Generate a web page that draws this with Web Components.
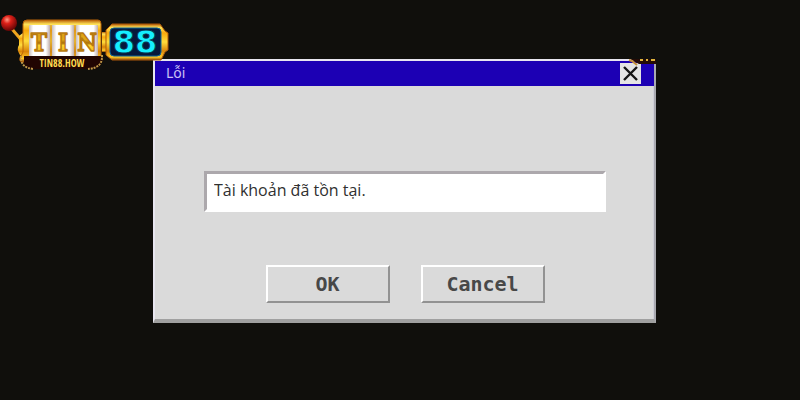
<!DOCTYPE html>
<html lang="vi">
<head>
<meta charset="utf-8">
<meta name="viewport" content="width=device-width, initial-scale=1">
<title>Lỗi</title>
<style>
    * { box-sizing: border-box; }
    body {
        margin: 0;
        min-height: 100vh;
        background: #100f0c;
        font-family: "Noto Sans", "Open Sans", sans-serif;
    }
    main { padding: 59px 144px 77px 153px; }
</style>
</head>
<body>
<main>
    <error-dialog heading="Lỗi">
        <message-box slot="message" label="Nội dung" value="Tài khoản đã tồn tại."></message-box>
        <retro-button slot="actions">OK</retro-button>
        <retro-button slot="actions">Cancel</retro-button>
    </error-dialog>
</main>
<site-logo></site-logo>

<script>
class SiteLogo extends HTMLElement {
    constructor() {
        super();
        this.attachShadow({ mode: 'open' });
    }

    connectedCallback() {
        this.shadowRoot.innerHTML = `
        <style>
            :host {
                position: absolute;
                left: 0;
                top: 12px;
                display: block;
            }
            svg { display: block; }
            text { font-weight: bold; text-anchor: middle; }
            .reels { font-family: "DejaVu Serif Condensed", "DejaVu Serif", serif; font-size: 24px; }
            .url { font-family: "Open Sans Condensed", "Roboto Condensed", "Liberation Sans", sans-serif; font-size: 10px; }
            .digits { font-family: "DejaVu Sans", sans-serif; font-size: 32px; }
        </style>
        <svg width="170" height="62" viewBox="0 12 170 62" role="img" aria-label="TIN 88">
            <defs>
                <linearGradient id="gold" x1="0" y1="0" x2="0" y2="1">
                    <stop offset="0" stop-color="#b85e08"/>
                    <stop offset=".1" stop-color="#ffe45a"/>
                    <stop offset=".25" stop-color="#f8a80c"/>
                    <stop offset=".5" stop-color="#ffdc3c"/>
                    <stop offset=".75" stop-color="#d98408"/>
                    <stop offset=".92" stop-color="#ffc928"/>
                    <stop offset="1" stop-color="#8e4605"/>
                </linearGradient>
                <linearGradient id="reel">
                    <stop offset="0" stop-color="#c9bebb"/>
                    <stop offset=".2" stop-color="#ffffff"/>
                    <stop offset=".8" stop-color="#ffffff"/>
                    <stop offset="1" stop-color="#bfaeaa"/>
                </linearGradient>
                <linearGradient id="letter" x1="0" y1="0" x2="0" y2="1">
                    <stop offset="0" stop-color="#d99a12"/>
                    <stop offset=".4" stop-color="#e0a818"/>
                    <stop offset=".52" stop-color="#a86d0a"/>
                    <stop offset=".6" stop-color="#ffd530"/>
                    <stop offset="1" stop-color="#e9a712"/>
                </linearGradient>
                <radialGradient id="ball" cx=".38" cy=".3" r=".7">
                    <stop offset="0" stop-color="#ff9a85"/>
                    <stop offset=".35" stop-color="#de2018"/>
                    <stop offset="1" stop-color="#650505"/>
                </radialGradient>
            </defs>
            <path d="M12 29l11 13" stroke="#f0a51e" stroke-width="3"/>
            <circle cx="9" cy="23" r="8" fill="url(#ball)"/>
            <path d="M19 36l5-4v26l-4-3q-4-6-1-10z" fill="url(#gold)"/>
            <path d="M27 20h71q3 0 3 4v34q0 4-4 4H23q-4 0-3-4l3-6V24q0-4 4-4z" fill="url(#gold)" stroke="#b96408"/>
            <g fill="url(#reel)">
                <rect x="29" y="25" width="21" height="32" rx="1"/>
                <rect x="52" y="25" width="22" height="32"/>
                <rect x="76" y="25" width="22" height="32" rx="1"/>
            </g>
            <path d="M51 25v31M75 25v31" stroke="#c98a2a" stroke-width="1"/>
            <g class="reels" fill="url(#letter)" stroke="#b87a10" stroke-width="1.4" stroke-linejoin="round">
                <text x="39" y="51">T</text>
                <text x="63" y="51">I</text>
                <text x="87" y="51">N</text>
            </g>
            <path d="M24 56h76q3 0 3 4l-3 5q-2 4-5 4H31q-4 0-7-5z" fill="#210502"/>
            <g fill="none" stroke="#c29a4a" stroke-width="2" stroke-dasharray="2 1">
                <path d="M21 56q-1 12 13 13"/>
                <path d="M102 55q1 13-14 14"/>
            </g>
            <text class="url" x="62" y="67" fill="#ffd950">TIN88.HOW</text>
            <path d="M102 32h7v20h-7z" fill="url(#gold)"/>
            <path d="M112 24h48l5 7 3 2v17l-3 2-4 8h-49l-6-5V30z" fill="url(#gold)" stroke="#ac590b"/>
            <rect x="110" y="28" width="51" height="28" rx="4" fill="#06183b" stroke="#08639a"/>
            <text class="digits" x="135" y="53" fill="#15eeff" stroke="#06304f" stroke-width=".8">88</text>
        </svg>
        `;
    }
}
customElements.define('site-logo', SiteLogo);

class MessageBox extends HTMLElement {
    constructor() {
        super();
        this.attachShadow({ mode: 'open' });
    }

    connectedCallback() {
        this.shadowRoot.innerHTML = `
        <style>
            :host { display: block; }
            input {
                display: block;
                box-sizing: border-box;
                width: 100%;
                height: 41px;
                padding: 0 7px 3px;
                border: 3px solid #fff;
                border-top-color: #aca8ac;
                border-left-color: #aca8ac;
                background: #fff;
                color: #303030;
                font: 16px "Open Sans", "Noto Sans", sans-serif;
                outline: none;
            }
        </style>
        <input type="text" readonly>
        `;
        const input = this.shadowRoot.querySelector('input');
        input.value = this.getAttribute('value');
        input.setAttribute('aria-label', this.getAttribute('label'));
    }
}
customElements.define('message-box', MessageBox);

class RetroButton extends HTMLElement {
    constructor() {
        super();
        this.attachShadow({ mode: 'open' });
    }

    connectedCallback() {
        this.shadowRoot.innerHTML = `
        <style>
            :host { display: block; }
            button {
                display: block;
                width: 124px;
                height: 38px;
                padding: 0;
                border: 2px solid #fff;
                border-right-color: #929292;
                border-bottom-color: #929292;
                background: #dadada;
                color: #484848;
                font: bold 20px "DejaVu Sans Mono", monospace;
            }
        </style>
        <button type="button"><slot></slot></button>
        `;
    }
}
customElements.define('retro-button', RetroButton);

class ErrorDialog extends HTMLElement {
    constructor() {
        super();
        this.attachShadow({ mode: 'open' });
    }

    connectedCallback() {
        this.shadowRoot.innerHTML = `
        <style>
            :host {
                display: block;
                position: relative;
                border: 2px solid #e8e6f0;
                border-right: 2px solid #a9a9b0;
                border-bottom: 4px solid #a0a0a0;
                background: #dadada;
            }
            header {
                display: flex;
                box-sizing: border-box;
                align-items: flex-start;
                justify-content: space-between;
                height: 25px;
                padding: 2px 13px 0 11px;
                background: #1c00b4;
                color: #c9c0f5;
            }
            h1 { margin: 0; font-size: 14px; font-weight: normal; line-height: 20px; }
            .close {
                display: flex;
                width: 21px;
                height: 21px;
                padding: 0;
                border: 0;
                background: #e4e4e4;
                align-items: center;
                justify-content: center;
            }
            .content {
                padding: 85px 47px 16px 49px;
                border-right: 1px solid #cfcfd8;
            }
            .actions {
                display: flex;
                justify-content: center;
                gap: 31px;
                margin-top: 53px;
            }
            .ornament { position: absolute; top: -2px; right: -2px; }
        </style>
        <header>
            <h1></h1>
            <button class="close" type="button" aria-label="Đóng">
                <svg width="17" height="17" viewBox="0 0 17 17" fill="none" stroke="#151515" stroke-width="2.4">
                    <path d="M2 2l13 13M15 2L2 15"/>
                </svg>
            </button>
        </header>
        <div class="content">
            <slot name="message"></slot>
            <div class="actions"><slot name="actions"></slot></div>
        </div>
        <svg class="ornament" width="28" height="7" viewBox="0 0 28 7" aria-hidden="true">
            <path d="M2 0h26v5H11z" fill="#240b06"/>
            <path d="M1 1l3 1 5 4" fill="none" stroke="#c4903c" stroke-width="2"/>
            <path d="M12 1h3M18 1h2M23 1h4" stroke="#dfb33c" stroke-width="2"/>
        </svg>
        `;
        this.shadowRoot.querySelector('h1').textContent = this.getAttribute('heading');
        this.shadowRoot.querySelector('.close').addEventListener('click', () => this.remove());
    }
}
customElements.define('error-dialog', ErrorDialog);
</script>
</body>
</html>
